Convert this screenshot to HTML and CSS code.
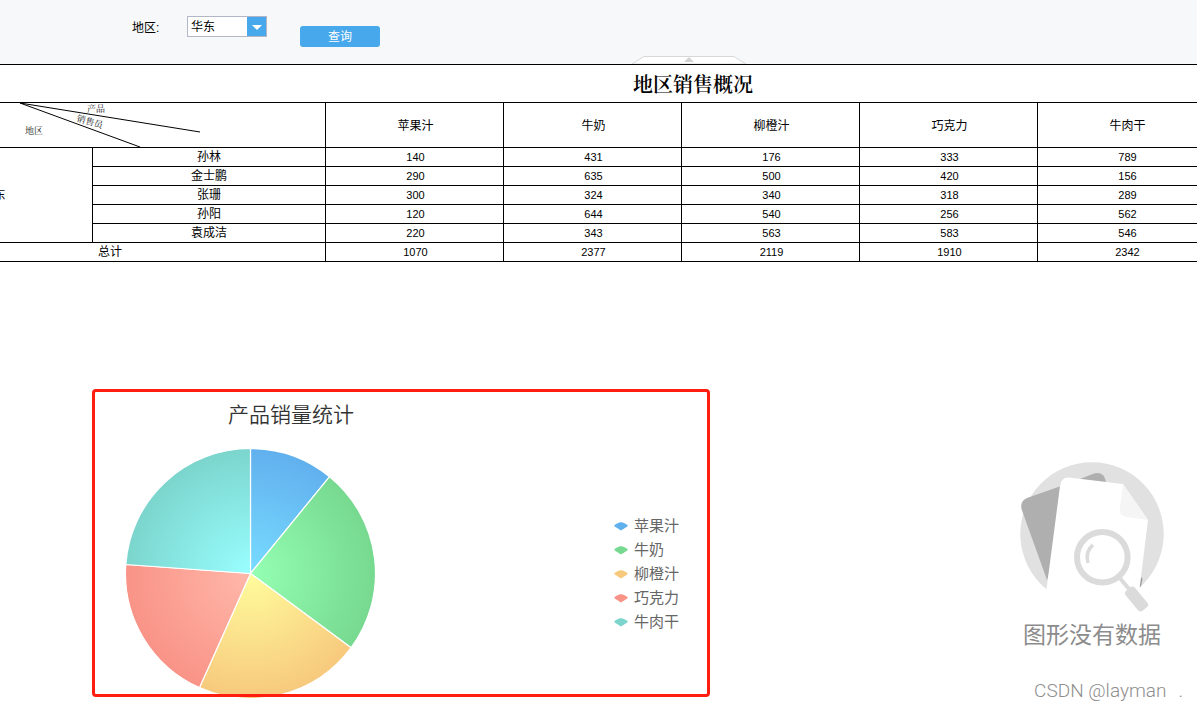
FILE: index.html
```html
<!DOCTYPE html>
<html lang="zh-CN">
<head>
<meta charset="utf-8">
<title>地区销售概况</title>
<link rel="stylesheet" href="styles.css">
</head>
<body>
<form class="toolbar">
  <label class="toolbar-label" for="region">地区:</label>
  <span class="select-box">
    <select id="region" class="select"><option>华东</option></select>
    <svg class="select-arrow" width="19" height="19" viewBox="0 0 19 19" aria-hidden="true"><path d="M5 8h10L10 13z" fill="#fff"/></svg>
  </span>
  <button class="query" type="button">查询</button>
  <svg class="collapse-tab" width="114" height="8" viewBox="0 0 114 8" aria-hidden="true">
    <path d="M0 8L12 .5H102L114 8z" fill="#fff" stroke="#d8d8d8"/>
    <path d="M52 6L57 1 62 6z" fill="#d3d3d3"/>
  </svg>
</form>

<div class="report">
  <table class="sales">
    <colgroup>
      <col class="col-region"><col class="col-person"><col class="col-product"><col class="col-product"><col class="col-product"><col class="col-product"><col class="col-product"><col>
    </colgroup>
    <thead>
      <tr class="title-row"><th colspan="8">地区销售概况</th></tr>
      <tr class="head-row">
        <th class="diagonal" colspan="2">
          <svg width="430" height="44" viewBox="-105 103 430 44">
            <path d="M20 103L200 132M20 103L140 147" stroke="#000" fill="none"/>
            <text x="87" y="112">产品</text>
            <text x="76" y="121" transform="rotate(16 76 121)">销售员</text>
            <text x="25" y="134">地区</text>
          </svg>
        </th>
        <th>苹果汁</th><th>牛奶</th><th>柳橙汁</th><th>巧克力</th><th>牛肉干</th><th></th>
      </tr>
    </thead>
    <tbody>
      <tr><th rowspan="5">华东</th><th>孙林</th><td>140</td><td>431</td><td>176</td><td>333</td><td>789</td><td></td></tr>
      <tr><th>金士鹏</th><td>290</td><td>635</td><td>500</td><td>420</td><td>156</td><td></td></tr>
      <tr><th>张珊</th><td>300</td><td>324</td><td>340</td><td>318</td><td>289</td><td></td></tr>
      <tr><th>孙阳</th><td>120</td><td>644</td><td>540</td><td>256</td><td>562</td><td></td></tr>
      <tr><th>袁成洁</th><td>220</td><td>343</td><td>563</td><td>583</td><td>546</td><td></td></tr>
      <tr><th colspan="2">总计</th><td>1070</td><td>2377</td><td>2119</td><td>1910</td><td>2342</td><td></td></tr>
    </tbody>
  </table>
</div>

<main class="charts">
  <section class="chart">
    <div class="plot">
      <h2 class="chart-title">产品销量统计</h2>
      <svg class="pie" width="252" height="252" viewBox="-126.500 -125.500 252 252" role="img" aria-label="产品销量统计">
        <defs>
          <radialGradient id="g1" gradientUnits="userSpaceOnUse" cx="0" cy="0" r="125"><stop offset="0" stop-color="#78dcff"/><stop offset="1" stop-color="#61b0ee"/></radialGradient>
          <radialGradient id="g2" gradientUnits="userSpaceOnUse" cx="0" cy="0" r="125"><stop offset="0" stop-color="#94ffb3"/><stop offset="1" stop-color="#76d98f"/></radialGradient>
          <radialGradient id="g3" gradientUnits="userSpaceOnUse" cx="0" cy="0" r="125"><stop offset="0" stop-color="#fffc9c"/><stop offset="1" stop-color="#f7c97d"/></radialGradient>
          <radialGradient id="g4" gradientUnits="userSpaceOnUse" cx="0" cy="0" r="125"><stop offset="0" stop-color="#ffb8aa"/><stop offset="1" stop-color="#f99387"/></radialGradient>
          <radialGradient id="g5" gradientUnits="userSpaceOnUse" cx="0" cy="0" r="125"><stop offset="0" stop-color="#99ffff"/><stop offset="1" stop-color="#7bd5cd"/></radialGradient>
        </defs>
        <g stroke="#fff" stroke-width="1.200" stroke-linejoin="round">
          <path fill="url(#g1)" d="M0 0V-125A125 125 0 0 1 79.060 -96.830z"/>
          <path fill="url(#g2)" d="M0 0L79.060 -96.830A125 125 0 0 1 100.600 74.200z"/>
          <path fill="url(#g3)" d="M0 0L100.600 74.200A125 125 0 0 1 -51 114.100z"/>
          <path fill="url(#g4)" d="M0 0L-51 114.100A125 125 0 0 1 -124.700 -8.980z"/>
          <path fill="url(#g5)" d="M0 0L-124.700 -8.980A125 125 0 0 1 0 -125z"/>
        </g>
      </svg>
    </div>
    <ul class="legend">
      <li class="blue"><svg width="14" height="9" viewBox="0 0 14 9"><path d="M0 4Q7-3.500 14 4Q11 6 7 8.500Q3 6 0 4z"/></svg>苹果汁</li>
      <li class="green"><svg width="14" height="9" viewBox="0 0 14 9"><path d="M0 4Q7-3.500 14 4Q11 6 7 8.500Q3 6 0 4z"/></svg>牛奶</li>
      <li class="amber"><svg width="14" height="9" viewBox="0 0 14 9"><path d="M0 4Q7-3.500 14 4Q11 6 7 8.500Q3 6 0 4z"/></svg>柳橙汁</li>
      <li class="red"><svg width="14" height="9" viewBox="0 0 14 9"><path d="M0 4Q7-3.500 14 4Q11 6 7 8.500Q3 6 0 4z"/></svg>巧克力</li>
      <li class="teal"><svg width="14" height="9" viewBox="0 0 14 9"><path d="M0 4Q7-3.500 14 4Q11 6 7 8.500Q3 6 0 4z"/></svg>牛肉干</li>
    </ul>
  </section>
  <section class="empty">
    <svg width="144" height="152" viewBox="0 0 144 152" aria-hidden="true">
      <path d="M25.500 127.500A71.700 71.700 0 1 1 118.500 127.500z" fill="#e1e1e1"/>
      <path d="M60 18L74 12.500Q84 10 86 21L84 30z" fill="#afafaf"/>
      <path d="M1.500 48Q0 40 7 37L41 25 48 60 27 119z" fill="#afafaf"/>
      <path d="M121 116L122.500 118 121 125 119 127z" fill="#9a9a9a"/>
      <path d="M26 132L40 25Q41 16 49 16.500L103 23 128 59 119 132z" fill="#fff"/>
      <path d="M103 23L100 47Q99 55 107 56L128 59z" fill="#f5f5f5"/>
      <path d="M99 116L109 128" stroke="#dbdbdb" stroke-width="4"/>
      <circle cx="82.300" cy="96.300" r="25.300" fill="#fff" stroke="#dbdbdb" stroke-width="6"/>
      <path d="M73 84Q65 90 68 102" fill="none" stroke="#dbdbdb" stroke-width="3.500"/>
      <rect x="110.500" y="125" width="12" height="26" rx="3.500" transform="rotate(-40 116.500 138)" fill="#dbdbdb"/>
    </svg>
    <p class="empty-text">图形没有数据</p>
  </section>
</main>
<div class="watermark"><span>CSDN @layman</span><span>.</span></div>
</body>
</html>
```
FILE: styles.css
```css
* { box-sizing: border-box; }
body {
  margin: 0;
  min-height: 100vh;
  position: relative;
  overflow-x: hidden;
  background: #fff;
  color: #000;
  font: 12px/17px "Liberation Sans", "Noto Sans CJK SC", sans-serif;
}
.toolbar {
  position: relative;
  display: flex;
  align-items: flex-start;
  height: 65px;
  padding: 16px 0 0 132px;
  background: #f7f8fa;
  border-bottom: 1px solid #000;
}
.toolbar-label { width: 55px; line-height: 24px; }
.select-box { position: relative; display: flex; margin-right: 33px; }
.select {
  appearance: none;
  width: 80px;
  height: 21px;
  padding: 1px 22px 0 3px;
  border: 1px solid #b3b6c6;
  border-radius: 0;
  background: #fff;
  color: #000;
  font: inherit;
}
.select-arrow {
  position: absolute;
  top: 1px;
  right: 1px;
  background: #48a8ec;
  pointer-events: none;
}
.query {
  width: 80px;
  height: 21px;
  margin-top: 10px;
  padding: 2px 0 0;
  border: 0;
  border-radius: 3px;
  background: #48a8ec;
  color: #fff;
  font: inherit;
}
.collapse-tab { position: absolute; left: 632px; bottom: 0; }

.report { overflow: hidden; }
.sales {
  width: calc(100% + 400px);
  margin-left: -105px;
  table-layout: fixed;
  border-collapse: separate;
  border-spacing: 0;
}
.col-region { width: 198px; }
.col-person { width: 233px; }
.col-product { width: 178px; }
.sales th, .sales td {
  height: 19px;
  padding: 1px 0 0;
  border-right: 1px solid #000;
  border-bottom: 1px solid #000;
  font-weight: normal;
  text-align: center;
}
.sales td { padding: 0 0 0 2px; font-size: 11px; }
.sales .title-row th {
  height: 38px;
  padding: 0;
  font: 600 20px/28px "Noto Serif CJK SC", "Noto Sans CJK SC", serif;
}
.sales .head-row th { height: 45px; padding: 2px 0 0 2px; }
.sales .head-row .diagonal { padding: 0; }
.diagonal svg { display: block; }
.diagonal text { font: 9px "Noto Serif CJK SC", "Noto Sans CJK SC", serif; fill: #222; }

.charts {
  display: flex;
  justify-content: space-between;
  align-items: flex-start;
  padding: 127px 33px 0 92px;
}
.chart {
  position: relative;
  display: flex;
  justify-content: space-between;
  width: 618px;
  height: 308px;
  padding: 10px 31px 0 32px;
}
.chart::after {
  content: "";
  position: absolute;
  inset: 0;
  border: 3px solid #ff1e10;
  border-radius: 4px;
}
.chart-title {
  margin: 0 0 17px 104px;
  color: #333;
  font-size: 21px;
  line-height: 32px;
  font-weight: 350;
}
.pie { display: block; }
.legend {
  margin: 115px 0 0;
  padding: 0;
  list-style: none;
  color: #666;
  font-size: 15px;
  line-height: 24px;
}
.legend li { display: flex; align-items: center; gap: 6px; }
.blue { fill: #61b0ee; }
.green { fill: #76d98f; }
.amber { fill: #f7c97d; }
.red { fill: #f99387; }
.teal { fill: #7bd5cd; }
.empty {
  display: flex;
  flex-direction: column;
  align-items: center;
  margin-top: 72px;
}
.empty svg { display: block; }
.empty-text { margin: 5px 0 0; color: #8c8c8c; font-size: 23px; line-height: 34px; }
.watermark {
  position: absolute;
  right: 14px;
  bottom: 7px;
  display: flex;
  gap: 12px;
  color: #8e8e8e;
  font: 300 19px/24px Roboto, "Liberation Sans", sans-serif;
}
```
